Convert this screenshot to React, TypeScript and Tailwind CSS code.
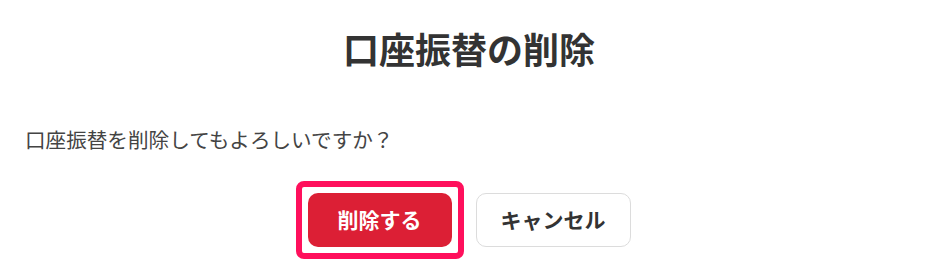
import React from 'react';

export default function App() {
  return (
    <div
      className="w-[938px] h-[274px] bg-white text-[#333] px-[25px] pt-[24px]"
      style={{ fontFamily: '"Noto Sans CJK JP", "Noto Sans", sans-serif' }}
    >
      <h2 className="text-center text-[36px] leading-[48px] font-bold">口座振替の削除</h2>

      <p className="mt-[53px] text-[20.6px] leading-[28px] text-[#444]">
        口座振替を削除してもよろしいですか？
      </p>

      <div className="mt-[40px] flex justify-center gap-[24px]">
        <button
          type="button"
          className="relative w-[144px] h-[54px] rounded-[10px] bg-[#dc1f35] text-white text-[21px] font-bold"
        >
          削除する
          {/* focus ring */}
          <span className="pointer-events-none absolute -inset-[12px] rounded-[8px] border-[6px] border-[#ff105c]" />
        </button>
        <button
          type="button"
          className="w-[155px] h-[54px] rounded-[10px] bg-white border border-[#dcdcdc] text-[#333] text-[21px] font-bold"
        >
          キャンセル
        </button>
      </div>
    </div>
  );
}
